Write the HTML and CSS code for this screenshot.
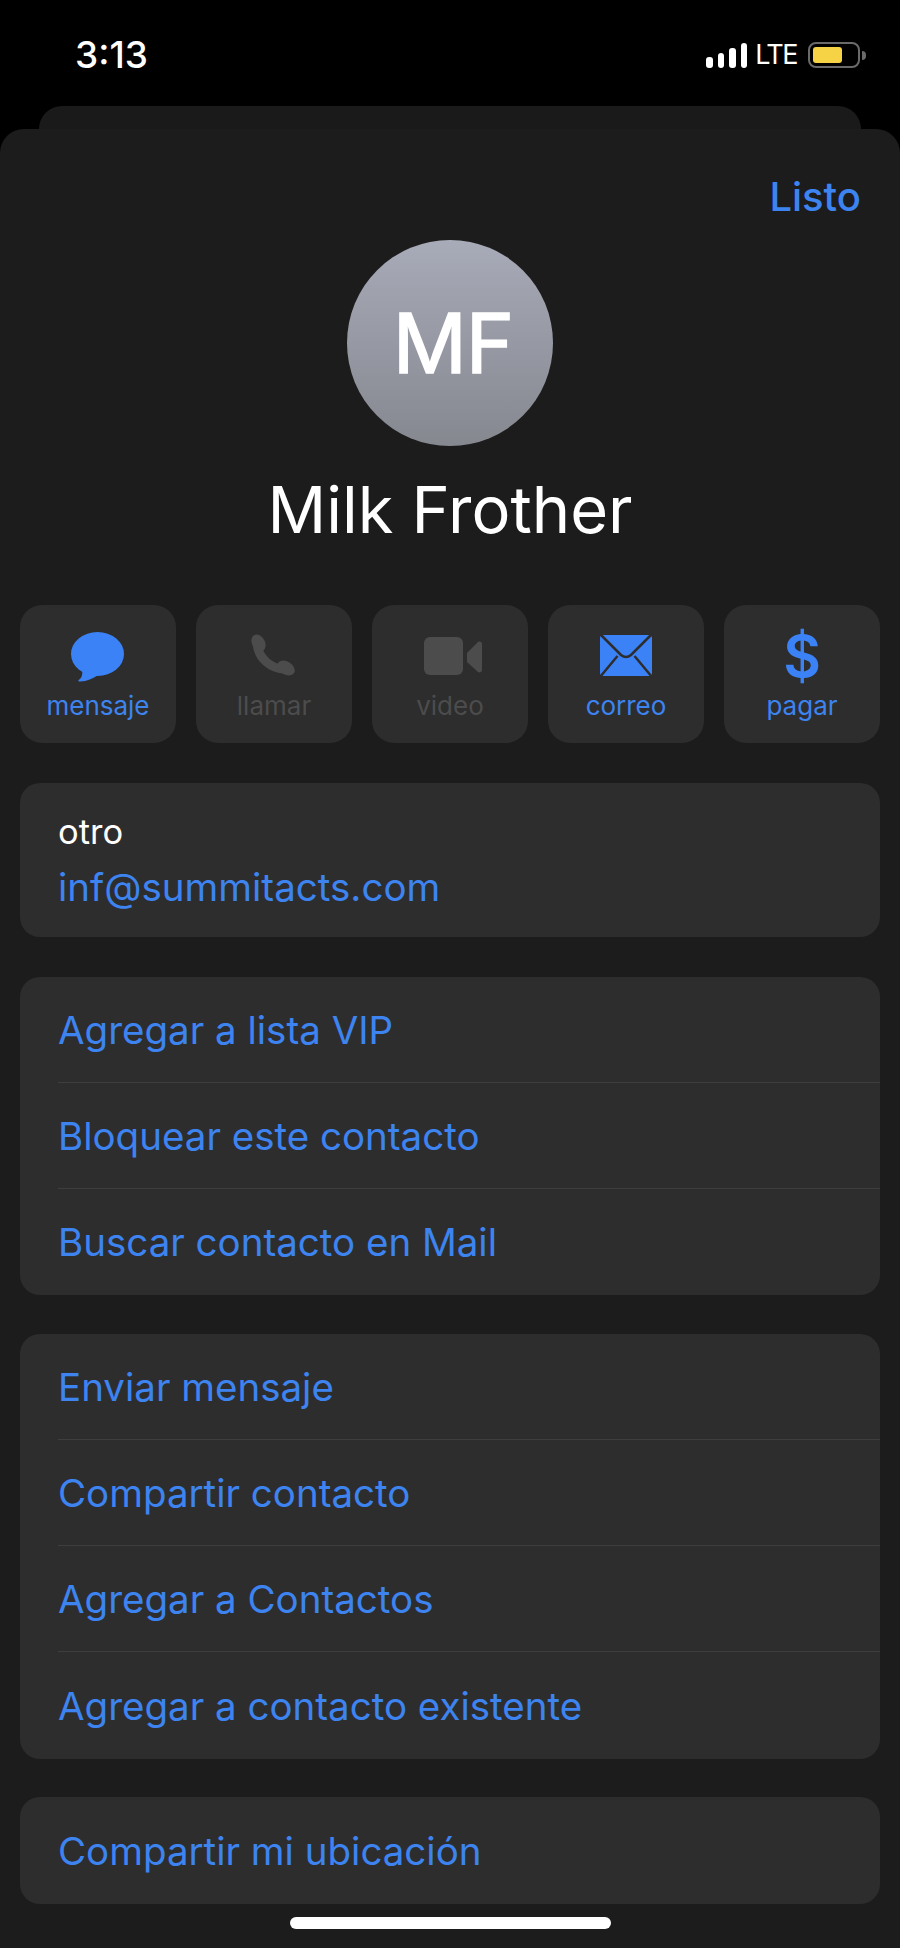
FILE: index.html
```html
<!DOCTYPE html>
<html lang="es">
<head>
    <meta charset="UTF-8">
    <meta name="viewport" content="width=device-width, initial-scale=1.0">
    <title>Milk Frother</title>
    <link rel="stylesheet" href="styles.css">
</head>
<body>

<div class="status-bar">
    <span class="time">3:13</span>
    <div class="status-icons">
        <div class="signal">
            <span class="bar bar1"></span>
            <span class="bar bar2"></span>
            <span class="bar bar3"></span>
            <span class="bar bar4"></span>
        </div>
        <span class="network">LTE</span>
        <div class="battery"><span class="battery-level"></span></div>
        <span class="battery-cap"></span>
    </div>
</div>

<div class="back-card"></div>

<div class="sheet">
    <div class="header">
        <span class="done">Listo</span>
    </div>

    <div class="avatar">MF</div>
    <h1 class="name">Milk Frother</h1>

    <div class="actions">
        <div class="action">
            <svg class="icon" width="60" height="60" viewBox="0 0 60 60">
                <ellipse cx="29.5" cy="28" rx="26.5" ry="22" fill="#3b82f6"/>
                <path d="M14 42 C15 48 14 52 10.500 54 C10 55 11 55.500 12 55.500 C19 55.500 25 52.500 30 49 Z" fill="#3b82f6"/>
            </svg>
            <span class="label">mensaje</span>
        </div>
        <div class="action disabled">
            <svg class="icon" width="60" height="60" viewBox="0 0 60 60">
                <path d="M13 17 C14 32 27 44 43 43" fill="none" stroke="#4c4c4c" stroke-width="9"/>
                <ellipse cx="14.500" cy="17" rx="6.500" ry="9" transform="rotate(-28 14.500 17)" fill="#4c4c4c"/>
                <ellipse cx="42" cy="42" rx="9.500" ry="6.500" transform="rotate(32 42 42)" fill="#4c4c4c"/>
            </svg>
            <span class="label">llamar</span>
        </div>
        <div class="action disabled">
            <svg class="icon" width="70" height="60" viewBox="0 0 70 60">
                <rect x="9" y="11" width="39" height="38" rx="6" fill="#4c4c4c"/>
                <path d="M52 27 L63 16 C65 15 67 16 67 18 L67 44 C67 46 65 47 63 46 L52 36 Z" fill="#4c4c4c"/>
            </svg>
            <span class="label">video</span>
        </div>
        <div class="action">
            <svg class="icon" width="60" height="60" viewBox="0 0 60 60">
                <rect x="4" y="9" width="52" height="41" rx="3" fill="#3b82f6"/>
                <path d="M4 8 L25 29 Q30 33 35 29 L56 8" fill="none" stroke="#2d2d2d" stroke-width="2.500"/>
                <path d="M4 51 L21.500 30 M56 51 L38.500 30" fill="none" stroke="#2d2d2d" stroke-width="2.500"/>
            </svg>
            <span class="label">correo</span>
        </div>
        <div class="action">
            <span class="icon dollar">$</span>
            <span class="label">pagar</span>
        </div>
    </div>

    <div class="card email-card">
        <div class="email-type">otro</div>
        <div class="link">inf@summitacts.com</div>
    </div>

    <div class="card">
        <div class="row link">Agregar a lista VIP</div>
        <div class="row link">Bloquear este contacto</div>
        <div class="row link">Buscar contacto en Mail</div>
    </div>

    <div class="card contact-card">
        <div class="row link">Enviar mensaje</div>
        <div class="row link">Compartir contacto</div>
        <div class="row link">Agregar a Contactos</div>
        <div class="row link">Agregar a contacto existente</div>
    </div>

    <div class="card last-card">
        <div class="row link">Compartir mi ubicación</div>
    </div>

    <div class="home-indicator"></div>
</div>

</body>
</html>
```

FILE: styles.css
```css
html, body {
    margin: 0;
    height: 1948px;
    overflow: hidden;
    background-color: #000;
    font-family: Inter, "Liberation Sans", sans-serif;
}

.status-bar {
    height: 106px;
    display: flex;
    justify-content: space-between;
    box-sizing: border-box;
    padding: 36px 34px 0 75px;
    color: #fff;
}

.time {
    font-size: 37px;
    font-weight: 500;
    line-height: 38px;
}

.status-icons {
    display: flex;
    align-items: flex-start;
    padding-top: 6px;
}

.signal {
    display: flex;
    align-items: flex-end;
    gap: 5px;
    height: 25px;
    margin-top: 1px;
}

.bar {
    width: 6.5px;
    background-color: #fff;
    border-radius: 3px;
}

.bar1 { height: 11px; }
.bar2 { height: 15px; }
.bar3 { height: 20px; }
.bar4 { height: 25px; }

.network {
    margin-left: 8px;
    font-size: 27px;
    line-height: 26px;
    font-weight: 400;
    letter-spacing: -1.500px;
}

.battery {
    width: 52px;
    height: 26px;
    margin-left: 11px;
    box-sizing: border-box;
    border: 2px solid #6a6a6a;
    border-radius: 8px;
    padding: 3px;
}

.battery-level {
    display: block;
    width: 29px;
    height: 16px;
    background-color: #f6d245;
    border-radius: 3px;
}

.battery-cap {
    width: 4px;
    height: 9px;
    margin: 9px 0 0 2px;
    background-color: #6a6a6a;
    border-radius: 0 4px 4px 0;
}

.back-card {
    height: 23px;
    margin: 0 39px;
    background-color: #1a1a1a;
    border-radius: 24px 24px 0 0;
}

.sheet {
    height: 1819px;
    box-sizing: border-box;
    padding: 0 20px;
    background-color: #1c1c1c;
    border-radius: 24px 24px 0 0;
}

.header {
    display: flex;
    justify-content: flex-end;
    padding-top: 46px;
    padding-right: 19px;
}

.done {
    font-size: 40px;
    font-weight: 500;
    line-height: 44px;
    color: #3d84f0;
}

.avatar {
    width: 206px;
    height: 206px;
    box-sizing: border-box;
    margin: 21px auto 0;
    padding-left: 6px;
    display: flex;
    align-items: center;
    justify-content: center;
    border-radius: 50%;
    background: linear-gradient(#a8abb8, #85888f);
    color: #fff;
    font-size: 82px;
    font-weight: 400;
    letter-spacing: -1px;
    -webkit-text-stroke: 1.500px #fff;
}

.name {
    margin: 24px 0 0;
    text-align: center;
    font-size: 65px;
    font-weight: 400;
    line-height: 80px;
    color: #fff;
}

.actions {
    display: flex;
    gap: 20px;
    margin-top: 55px;
}

.action {
    width: 156px;
    height: 138px;
    display: flex;
    flex-direction: column;
    align-items: center;
    background-color: #2d2d2d;
    border-radius: 22px;
    color: #3d84f0;
}

.action.disabled {
    color: #4c4c4c;
}

.icon {
    display: block;
    margin-top: 21px;
}

.dollar {
    height: 60px;
    font-size: 58px;
    font-weight: 600;
    line-height: 60px;
    color: #3b82f6;
}

.label {
    margin-top: 5px;
    font-size: 26px;
    line-height: 30px;
}

.card {
    margin-top: 40px;
    background-color: #2d2d2d;
    border-radius: 20px;
    font-size: 38.500px;
}

.email-card {
    height: 154px;
    box-sizing: border-box;
    padding: 27px 38px 0;
}

.email-type {
    color: #fff;
    font-size: 34.500px;
    line-height: 44px;
}

.email-card .link {
    margin-top: 11px;
    line-height: 44px;
}

.link {
    color: #3d84f0;
}

.row {
    height: 106px;
    display: flex;
    align-items: center;
    margin-left: 38px;
    border-top: 1px solid #3e3e3e;
    box-sizing: border-box;
}

.row:first-child {
    height: 105px;
    border-top: none;
}

.row:last-child {
    height: 107px;
}

.contact-card {
    margin-top: 39px;
}

.contact-card .row:last-child {
    height: 108px;
}

.last-card {
    margin-top: 38px;
}

.last-card .row {
    height: 107px;
}

.home-indicator {
    width: 321px;
    height: 12px;
    margin: 13px auto 0;
    background-color: #fff;
    border-radius: 6px;
}
```
